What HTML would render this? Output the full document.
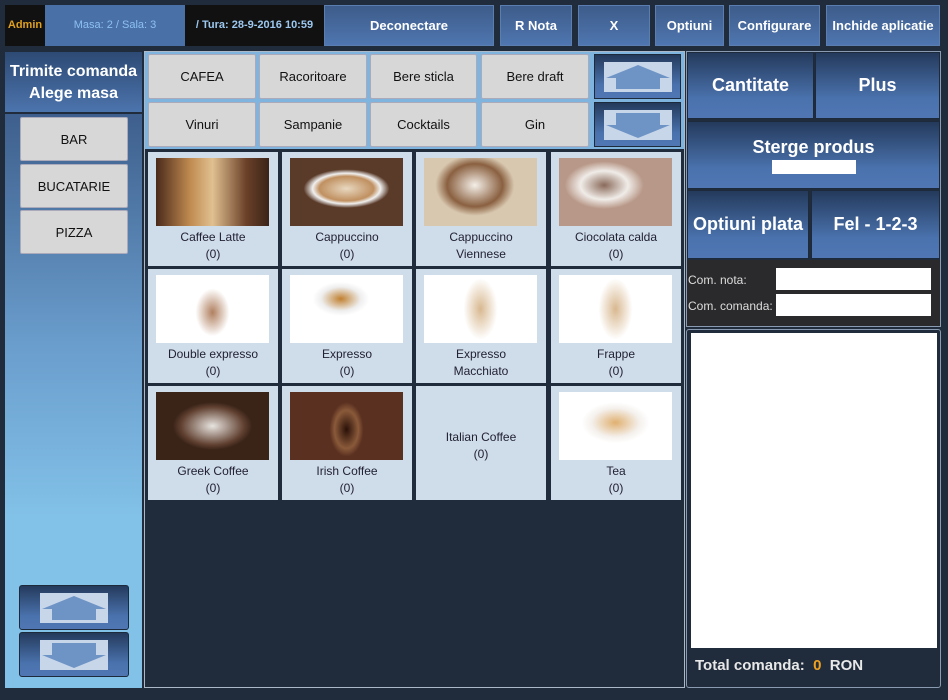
<!DOCTYPE html><html><head><style>
*{margin:0;padding:0;box-sizing:border-box}
body{width:948px;height:700px;background:#202c3b;font-family:"Liberation Sans",sans-serif;position:relative;overflow:hidden}
.a{position:absolute}
.tb{position:absolute;top:5px;height:41px;background:linear-gradient(#3d5c8a,#4f76b0);color:#fff;font-weight:bold;font-size:13px;display:flex;align-items:center;justify-content:center;border:1px solid #5a7eb0}
.cat{position:absolute;background:#d8d7d8;border:1px solid #aab;color:#111;font-size:13px;display:flex;align-items:center;justify-content:center;border-radius:2px}
.bb{position:absolute;background:linear-gradient(#243a5c,#4a72ad 70%,#5077b3);color:#fff;font-weight:bold;display:flex;align-items:center;justify-content:center;border:1px solid #1c2a3c}
.cell{position:absolute;background:#cfdcea;width:130px;height:114px;text-align:center;font-size:12px;color:#223;line-height:17px}
.cell .img{position:absolute;left:8px;top:6px;width:113px;height:68px}
.cell .t{position:absolute;left:0;right:0;top:77px}
.arr{position:absolute;background:#c8d6ea}
</style></head><body>
<div class="a" style="left:5px;top:5px;width:40px;height:41px;background:#111;color:#e0a020;font-size:11px;font-weight:bold;line-height:41px;text-align:center">Admin</div>
<div class="a" style="left:45px;top:5px;width:140px;height:41px;background:#4a70a8;color:#8cc0f0;font-size:11px;line-height:41px;text-align:center">Masa: 2 / Sala: 3</div>
<div class="a" style="left:185px;top:5px;width:139px;height:41px;background:#111;color:#9cc8f0;font-size:11px;font-weight:bold;line-height:41px;text-align:center">/ Tura: 28-9-2016 10:59</div>
<div class="tb" style="left:324px;width:170px">Deconectare</div>
<div class="tb" style="left:500px;width:72px">R Nota</div>
<div class="tb" style="left:578px;width:72px">X</div>
<div class="tb" style="left:655px;width:69px">Optiuni</div>
<div class="tb" style="left:729px;width:91px">Configurare</div>
<div class="tb" style="left:826px;width:114px">Inchide aplicatie</div>

<div class="a" style="left:5px;top:52px;width:137px;height:60px;background:linear-gradient(#2d4a74,#4c74ad);color:#fff;font-weight:bold;font-size:16px;text-align:center;line-height:22px;padding-top:9px">Trimite comanda<br>Alege masa</div>
<div class="a" style="left:5px;top:114px;width:137px;height:574px;background:linear-gradient(#3e5f8d,#6a9dcc 40%,#82c1e8 70%,#82c1e8)"></div>
<div class="cat" style="left:20px;top:117px;width:108px;height:44px">BAR</div>
<div class="cat" style="left:20px;top:164px;width:108px;height:44px">BUCATARIE</div>
<div class="cat" style="left:20px;top:210px;width:108px;height:44px">PIZZA</div>
<div class="bb" style="left:19px;top:585px;width:110px;height:45px;border-radius:3px"><svg width="68" height="30"><rect width="68" height="30" fill="#c8d6ea"/><path d="M34 3 L66 16 L56 16 L56 27 L12 27 L12 16 L2 16Z" fill="#6e94c6"/></svg></div>
<div class="bb" style="left:19px;top:632px;width:110px;height:45px;border-radius:3px"><svg width="68" height="30"><rect width="68" height="30" fill="#c8d6ea"/><path d="M34 28 L66 15 L56 15 L56 3 L12 3 L12 15 L2 15Z" fill="#6e94c6"/></svg></div>

<div class="a" style="left:144px;top:51px;width:541px;height:637px;border:1px solid #aab8c8;background:#202c3b"></div>
<div class="a" style="left:145px;top:52px;width:539px;height:97px;background:#7fb4de"></div>
<div class="cat" style="left:148px;top:54px;width:108px;height:45px">CAFEA</div>
<div class="cat" style="left:259px;top:54px;width:108px;height:45px">Racoritoare</div>
<div class="cat" style="left:370px;top:54px;width:107px;height:45px">Bere sticla</div>
<div class="cat" style="left:481px;top:54px;width:108px;height:45px">Bere draft</div>
<div class="cat" style="left:148px;top:102px;width:108px;height:45px">Vinuri</div>
<div class="cat" style="left:259px;top:102px;width:108px;height:45px">Sampanie</div>
<div class="cat" style="left:370px;top:102px;width:107px;height:45px">Cocktails</div>
<div class="cat" style="left:481px;top:102px;width:108px;height:45px">Gin</div>
<div class="bb" style="left:594px;top:54px;width:87px;height:45px"><svg width="68" height="30"><rect width="68" height="30" fill="#c8d6ea"/><path d="M34 3 L66 16 L56 16 L56 27 L12 27 L12 16 L2 16Z" fill="#6e94c6"/></svg></div>
<div class="bb" style="left:594px;top:102px;width:87px;height:45px"><svg width="68" height="30"><rect width="68" height="30" fill="#c8d6ea"/><path d="M34 28 L66 15 L56 15 L56 3 L12 3 L12 15 L2 15Z" fill="#6e94c6"/></svg></div>

<div class="cell" style="left:148px;top:152px"><div class="img" style="background:linear-gradient(90deg,#4a2a1a,#c08a50 30%,#e0c090 50%,#6a4028 80%,#3a2418)"></div><div class="t">Caffee Latte<br>(0)</div></div>
<div class="cell" style="left:282px;top:152px"><div class="img" style="background:radial-gradient(ellipse 40% 30% at 50% 45%,#e8d8c0,#c09060 60%,#f0f0f0 75%,#5a3a28 95%)"></div><div class="t">Cappuccino<br>(0)</div></div>
<div class="cell" style="left:416px;top:152px"><div class="img" style="background:radial-gradient(ellipse 35% 45% at 45% 40%,#f4efe8,#8a6040 70%,#d8c8b0)"></div><div class="t">Cappuccino<br>Viennese</div></div>
<div class="cell" style="left:551px;top:152px"><div class="img" style="background:radial-gradient(ellipse 35% 35% at 40% 40%,#8a6a5a,#f0ece8 60%,#b89888)"></div><div class="t">Ciocolata calda<br>(0)</div></div>
<div class="cell" style="left:148px;top:269px"><div class="img" style="background:radial-gradient(ellipse 15% 35% at 50% 55%,#b08060,#fff 100%)"></div><div class="t">Double expresso<br>(0)</div></div>
<div class="cell" style="left:282px;top:269px"><div class="img" style="background:radial-gradient(ellipse 25% 25% at 45% 35%,#c08030,#eee 70%,#fff)"></div><div class="t">Expresso<br>(0)</div></div>
<div class="cell" style="left:416px;top:269px"><div class="img" style="background:radial-gradient(ellipse 15% 45% at 50% 50%,#d8b890,#fff)"></div><div class="t">Expresso<br>Macchiato</div></div>
<div class="cell" style="left:551px;top:269px"><div class="img" style="background:radial-gradient(ellipse 15% 45% at 50% 50%,#d8b890,#fff)"></div><div class="t">Frappe<br>(0)</div></div>
<div class="cell" style="left:148px;top:386px"><div class="img" style="background:radial-gradient(ellipse 35% 35% at 50% 50%,#e8e4e0,#604030 80%,#3a2418)"></div><div class="t">Greek Coffee<br>(0)</div></div>
<div class="cell" style="left:282px;top:386px"><div class="img" style="background:radial-gradient(ellipse 15% 40% at 50% 55%,#2a1008,#8a5a3a 70%,#5a3020)"></div><div class="t">Irish Coffee<br>(0)</div></div>
<div class="cell" style="left:416px;top:386px"><div class="t" style="top:43px">Italian Coffee<br>(0)</div></div>
<div class="cell" style="left:551px;top:386px"><div class="img" style="background:radial-gradient(ellipse 30% 30% at 50% 45%,#e0b070,#f4f0ec 70%,#fff)"></div><div class="t">Tea<br>(0)</div></div>

<div class="a" style="left:686px;top:51px;width:255px;height:276px;border:1px solid #8a9ab0;background:#202c3b"></div>
<div class="bb" style="left:687px;top:52px;width:127px;height:67px;font-size:18px">Cantitate</div>
<div class="bb" style="left:815px;top:52px;width:125px;height:67px;font-size:18px">Plus</div>
<div class="bb" style="left:687px;top:121px;width:253px;height:68px;font-size:18px;flex-direction:column"><span>Sterge produs</span><span style="display:block;width:84px;height:14px;background:#fff;margin-top:2px"></span></div>
<div class="bb" style="left:687px;top:190px;width:122px;height:69px;font-size:18px">Optiuni plata</div>
<div class="bb" style="left:811px;top:190px;width:129px;height:69px;font-size:18px">Fel - 1-2-3</div>
<div class="a" style="left:687px;top:260px;width:253px;height:66px;background:#2a2a2c"></div>
<div class="a" style="left:688px;top:273px;color:#ddd;font-size:12px">Com. nota:</div>
<div class="a" style="left:688px;top:299px;color:#ddd;font-size:12px">Com. comanda:</div>
<div class="a" style="left:776px;top:268px;width:155px;height:22px;background:#fff"></div>
<div class="a" style="left:776px;top:294px;width:155px;height:22px;background:#fff"></div>
<div class="a" style="left:686px;top:329px;width:255px;height:359px;border:1px solid #8a9ab0;border-radius:3px"></div>
<div class="a" style="left:691px;top:333px;width:246px;height:315px;background:#fff"></div>
<div class="a" style="left:695px;top:657px;color:#e8e8e8;font-size:15px;font-weight:bold">Total comanda: <span style="color:#f0a020">&nbsp;0&nbsp;</span> RON</div>
</body></html>
